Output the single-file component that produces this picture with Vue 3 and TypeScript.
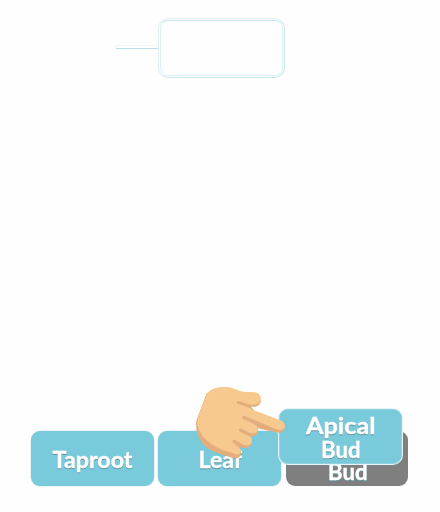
<script setup lang="ts">
interface Line { text: string; x: number; y: number; width: number }
interface Card { name: string; used: boolean; lines: Line[] }

const cards: Card[] = [
  { name: 'taproot', used: false, lines: [{ text: 'Taproot', x: 21.5, y: 37, width: 80 }] },
  { name: 'leaf', used: false, lines: [{ text: 'Leaf', x: 40.5, y: 37, width: 43.5 }] },
  { name: 'apical', used: true, lines: [{ text: 'Bud', x: 42, y: 49, width: 39.5 }] },
]
const dragged: Line[] = [
  { text: 'Apical', x: 27, y: 25, width: 69.5 },
  { text: 'Bud', x: 42, y: 49, width: 39.5 },
]
</script>

<template>
  <main class="board">
    <header class="target">
      <span class="connector"></span>
      <div class="slot"><div class="slot-inner"></div></div>
    </header>
    <section class="cards">
      <div v-for="card in cards" :key="card.name" class="card" :class="{ used: card.used }">
        <svg class="label" viewBox="0 0 123 55">
          <text v-for="line in card.lines" :key="line.text" :x="line.x" :y="line.y" :textLength="line.width" lengthAdjust="spacingAndGlyphs">{{ line.text }}</text>
        </svg>
      </div>
    </section>
    <div class="card dragged">
      <svg class="label" viewBox="0 0 123 55">
        <text v-for="line in dragged" :key="line.text" :x="line.x" :y="line.y" :textLength="line.width" lengthAdjust="spacingAndGlyphs">{{ line.text }}</text>
      </svg>
    </div>
    <svg class="hand" viewBox="0 0 435 345">
      <path fill="#e3ad7d" d="M139 122 C135 160 151 193 180 209 C204 222 235 229 254 235 C264 237 272 231 273 220 L269 202 C285 205 303 207 306 187 L302 168 C317 173 325 163 323 145 L384 158 C396 161 405 151 405 136 L320 100 L303 80 C320 83 333 75 333 59 L262 63 L170 40 Z" />
      <path fill="#f8c98f" d="M170 44 C181 23 211 18 238 22 C256 25 268 36 287 36 L307 36 C324 36 333 46 333 57 C332 70 319 75 306 74 C290 72 277 65 263 62 C258 64 259 70 264 72 C282 79 296 80 310 90 L391 121 C402 125 407 134 404 142 C400 151 390 152 380 148 L284 108 C276 107 275 114 280 117 L313 133 C323 138 326 145 322 153 C318 161 309 162 299 158 L275 146 C267 143 264 152 271 156 L296 167 C308 173 308 184 302 191 C296 198 286 197 277 193 L256 180 C247 177 245 186 251 190 L267 203 C275 209 274 217 267 222 C260 226 251 220 240 217 C213 210 191 199 174 184 C154 167 139 145 143 119 C147 97 161 70 170 44 Z" />
    </svg>
  </main>
</template>

<style>
body { margin: 0; background: #fff; }
</style>
<style scoped>
.board {
  position: relative;
  display: flex;
  flex-direction: column;
  justify-content: space-between;
  box-sizing: border-box;
  width: 440px;
  height: 512px;
  padding: 18px 31px 26px;
  overflow: hidden;
  background: #fefefe;
}
.target { display: flex; align-items: center; padding-left: 84px; }
.connector {
  box-sizing: border-box;
  width: 43px;
  height: 4px;
  margin-top: -2px;
  border-top: 1px solid #edf7f9;
  border-bottom: 1px solid #b9dfe8;
  border-left: 1px solid #e1f2f5;
  border-radius: 2px 0 0 2px;
}
.slot {
  box-sizing: border-box;
  width: 127px;
  height: 60px;
  padding: 1px;
  border: 1px solid #c9e6ec;
  border-top-color: #def0f4;
  border-left-color: #def0f4;
  border-radius: 10px;
}
.slot-inner {
  box-sizing: border-box;
  height: 100%;
  border: 1px solid #def0f4;
  border-top-color: #c4e5eb;
  border-radius: 8px;
}
.cards { display: flex; gap: 4.3px; }
.card {
  box-sizing: border-box;
  flex: none;
  width: 123px;
  height: 55px;
  border-radius: 9px;
  background: #79cbdb;
  box-shadow: 0 0 0 .5px #d3e6ea;
}
.used { width: 122.5px; background: #7f7f7f; box-shadow: none; }
.dragged {
  position: absolute;
  left: 279px;
  top: 409px;
  box-shadow: 0 0 0 1px #e6f5f8, inset 0 0 0 .5px #a7dce6;
}
.label {
  display: block;
  width: 123px;
  height: 55px;
  fill: #fff;
  stroke: #fff;
  stroke-width: .4px;
  font: 700 22px Lato, sans-serif;
  filter: drop-shadow(.5px 1px .5px #62929b);
}
.hand { position: absolute; left: 150px; top: 380px; width: 145px; height: 115px; }
</style>
